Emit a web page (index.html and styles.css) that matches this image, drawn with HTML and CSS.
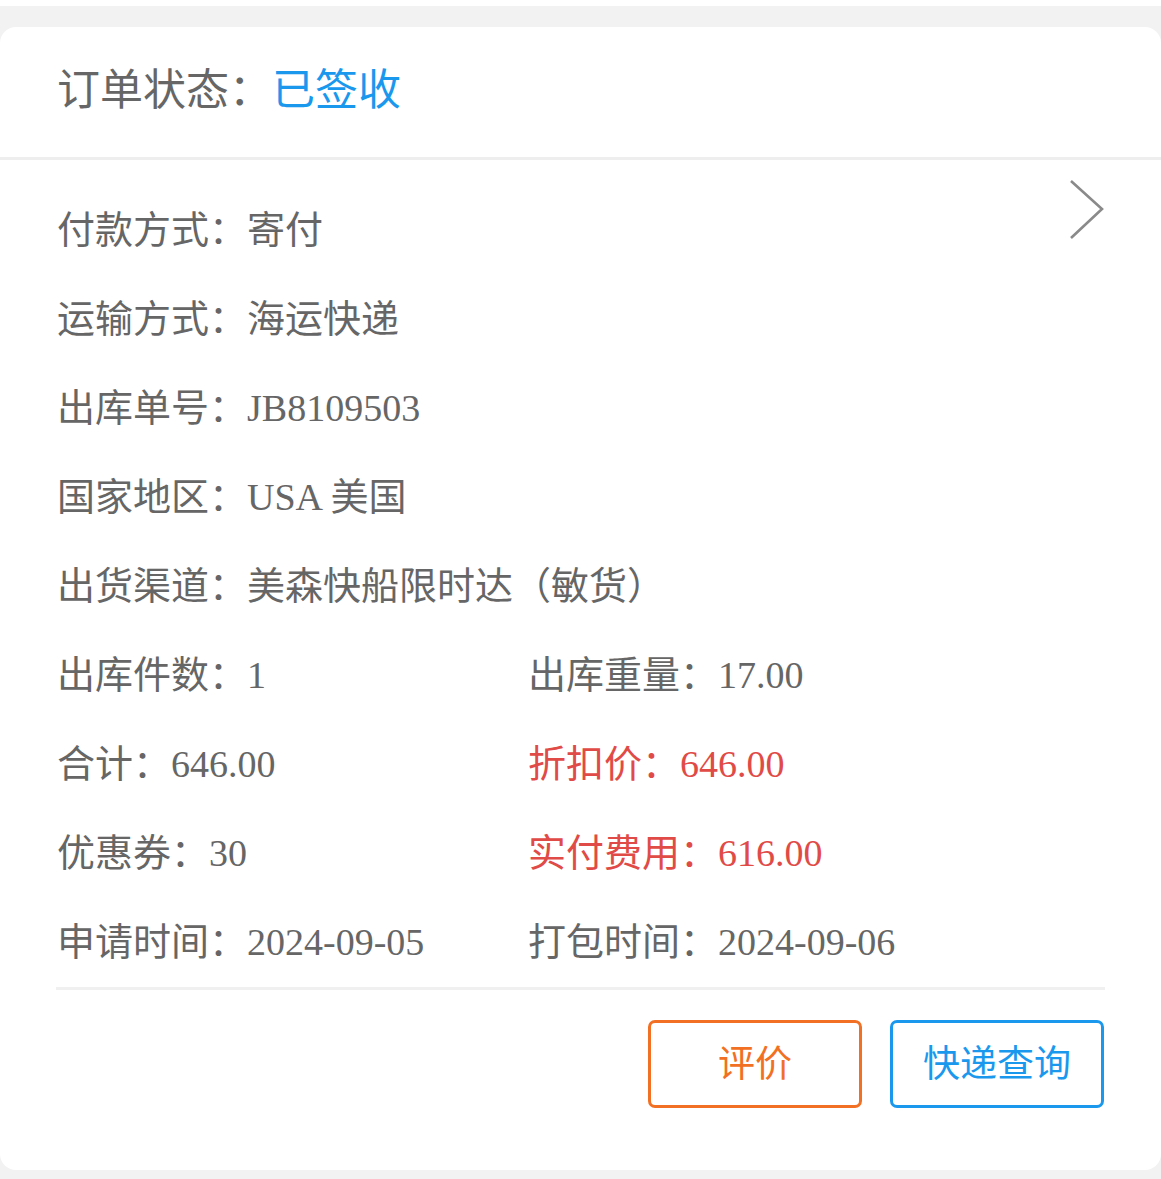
FILE: index.html
```html
<!DOCTYPE html>
<html lang="zh-CN">
<head>
<meta charset="utf-8">
<title>订单详情</title>
<link rel="stylesheet" href="styles.css">
</head>
<body>
<div class="strip"></div>
<div class="page">
  <div class="card">
    <div class="header">
      <span class="label">订单状态：</span><span class="status">已签收</span>
    </div>
    <div class="body">
      <svg class="arrow" width="40" height="64" viewBox="0 0 40 64">
        <polyline points="3,3 34,31 3,60" fill="none" stroke="#8a8a8a" stroke-width="2.6"/>
      </svg>
      <div class="row full">付款方式：寄付</div>
      <div class="row full">运输方式：海运快递</div>
      <div class="row full">出库单号：JB8109503</div>
      <div class="row full">国家地区：USA 美国</div>
      <div class="row full">出货渠道：美森快船限时达（敏货）</div>
      <div class="row">出库件数：1</div>
      <div class="row">出库重量：17.00</div>
      <div class="row">合计：646.00</div>
      <div class="row red">折扣价：646.00</div>
      <div class="row">优惠券：30</div>
      <div class="row red">实付费用：616.00</div>
      <div class="row">申请时间：2024-09-05</div>
      <div class="row">打包时间：2024-09-06</div>
    </div>
    <div class="divider"></div>
    <div class="actions">
      <div class="btn btn-orange">评价</div>
      <div class="btn btn-blue">快递查询</div>
    </div>
  </div>
</div>
</body>
</html>
```
FILE: styles.css
```css
html, body {
  margin: 0;
  padding: 0;
  background: #f2f2f2;
}
body {
  font-family: "Liberation Serif", "Noto Sans CJK SC", serif;
  color: #666666;
}
.strip {
  height: 6px;
  background: #ffffff;
}
.page {
  padding-top: 21px;
  padding-bottom: 9px;
}
.card {
  background: #ffffff;
  border-radius: 16px;
  height: 1143px;
  box-sizing: border-box;
}
.header {
  height: 133px;
  box-sizing: border-box;
  padding: 0 0 12px 57px;
  display: flex;
  align-items: center;
  font-family: "Noto Sans CJK SC", sans-serif;
  font-size: 43px;
  border-bottom: 3px solid #eeeeee;
}
.header .label {
  color: #666666;
}
.header .status {
  color: #1a98ee;
}
.body {
  position: relative;
  display: grid;
  grid-template-columns: 471px 1fr;
  padding: 26px 56px 0 57px;
}
.arrow {
  position: absolute;
  right: 53px;
  top: 18px;
}
.row {
  height: 89px;
  line-height: 89px;
  font-size: 38px;
  white-space: nowrap;
}
.row.full {
  grid-column: 1 / 3;
}
.row.red {
  color: #e14b47;
}
.divider {
  margin: 0 56px;
  height: 3px;
  background: #f0f0f0;
}
.actions {
  display: flex;
  justify-content: flex-end;
  gap: 28px;
  padding: 30px 57px 0 0;
}
.btn {
  width: 214px;
  height: 88px;
  box-sizing: border-box;
  border-radius: 7px;
  border: 3px solid;
  display: flex;
  align-items: center;
  justify-content: center;
  padding-bottom: 6px;
  font-family: "Noto Sans CJK SC", sans-serif;
  font-size: 37px;
}
.btn-orange {
  border-color: #f27023;
  color: #f27023;
}
.btn-blue {
  border-color: #1a98ee;
  color: #1a98ee;
}
```
